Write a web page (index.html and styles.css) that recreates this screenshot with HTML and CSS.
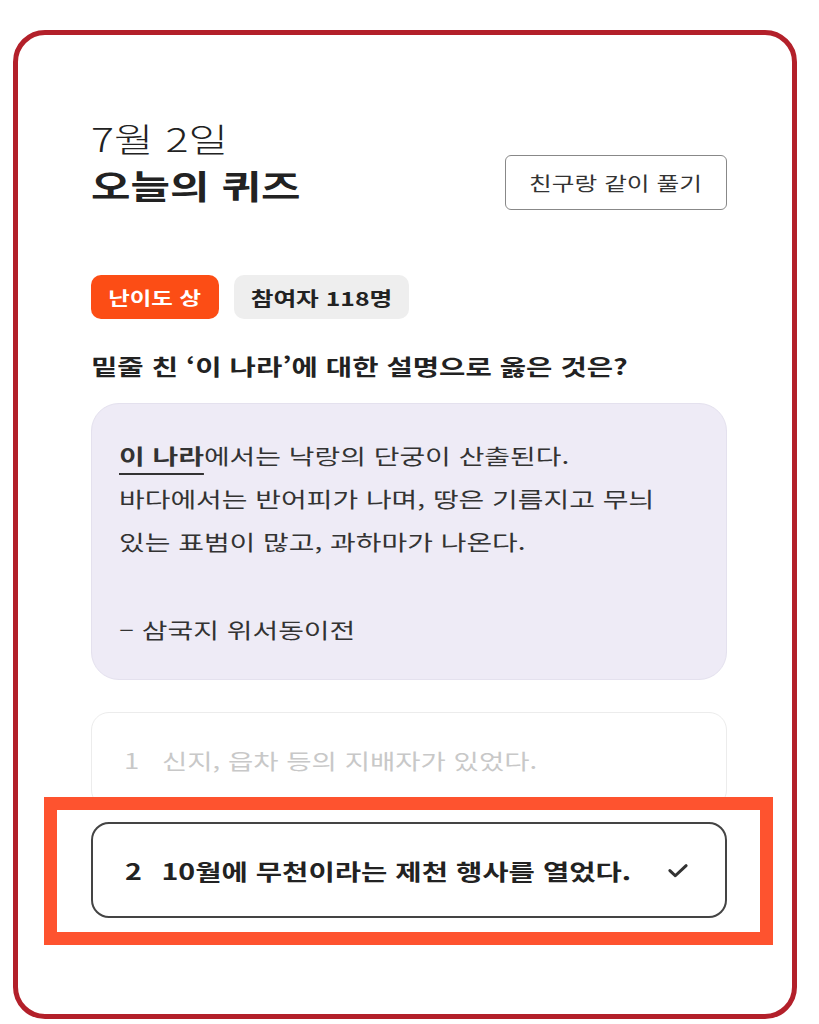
FILE: index.html
```html
<!DOCTYPE html>
<html lang="ko">
<head>
<meta charset="utf-8">
<title>오늘의 퀴즈</title>
<link rel="stylesheet" href="styles.css">
</head>
<body>
<div class="frame">
  <header class="head">
    <div class="titles">
      <div class="date"><span class="wide">7월 2일</span></div>
      <h1 class="title"><span class="wide">오늘의 퀴즈</span></h1>
    </div>
    <button class="share"><span class="wide wide-c">친구랑 같이 풀기</span></button>
  </header>

  <div class="badges">
    <span class="badge badge-level"><span class="wide wide-c">난이도 상</span></span>
    <span class="badge badge-count"><span class="wide wide-c">참여자 118명</span></span>
  </div>

  <p class="question"><span class="wide">밑줄 친 ‘이 나라’에 대한 설명으로 옳은 것은?</span></p>

  <div class="passage">
    <p class="wide"><u class="mark">이 나라</u>에서는 낙랑의 단궁이 산출된다.<br>
    바다에서는 반어피가 나며, 땅은 기름지고 무늬<br>
    있는 표범이 많고, 과하마가 나온다.</p>
    <p class="source"><span class="wide">– 삼국지 위서동이전</span></p>
  </div>

  <ul class="options">
    <li class="option option-dim"><span class="wide"><span class="num">1</span>신지, 읍차 등의 지배자가 있었다.</span></li>
    <li class="option-wrap">
      <div class="option option-picked"><span class="wide"><span class="num">2</span>10월에 무천이라는 제천 행사를 열었다.</span>
        <svg class="check" viewBox="0 0 24 24" width="26" height="26"><path d="M4.5 12.5l5 4.8L19.5 8" fill="none" stroke="#333" stroke-width="2.8" stroke-linecap="round" stroke-linejoin="round"/></svg>
      </div>
      <span class="highlight"></span>
    </li>
  </ul>
</div>
</body>
</html>
```

FILE: styles.css
```css
* { box-sizing: border-box; }

html, body {
  margin: 0;
  background: #ffffff;
}

body {
  font-family: "Noto Sans CJK KR", "Noto Sans", sans-serif;
  color: #222;
  padding: 30px 22px 0 13px;
}

/* the app's type is set wide; stretch text runs sideways */
.wide {
  display: inline-block;
  white-space: nowrap;
  transform: scaleX(1.3);
  transform-origin: 0 50%;
}

.wide-c {
  transform-origin: 50% 50%;
}

.frame {
  border: 5px solid #b3202a;
  border-radius: 32px;
  height: 989px;
  padding: 80px 65px 0 73px;
}

.head {
  display: flex;
  justify-content: space-between;
  align-items: flex-end;
}

.date {
  font-size: 33px;
  font-weight: 300;
  line-height: 46px;
}

.title {
  margin: 0;
  font-size: 33px;
  font-weight: 700;
  line-height: 48px;
}

.share {
  display: flex;
  align-items: center;
  justify-content: center;
  font-family: inherit;
  font-size: 19px;
  color: #333;
  background: #fff;
  border: 1.5px solid #888;
  border-radius: 6px;
  width: 222px;
  height: 55px;
  margin-bottom: -1px;
  padding: 0;
}

.badges {
  display: flex;
  gap: 15px;
  margin-top: 66px;
}

.badge {
  display: inline-flex;
  align-items: center;
  justify-content: center;
  height: 44px;
  border-radius: 10px;
  font-size: 18px;
  font-weight: 700;
}

.badge-level {
  width: 128px;
  background: #fc4d15;
  color: #fff;
}

.badge-count {
  width: 175px;
  background: #eeeeee;
  color: #222;
  font-size: 19px;
}

.question {
  margin: 30px 0 0;
  font-size: 22px;
  font-weight: 700;
  line-height: 32px;
}

.passage {
  margin-top: 22px;
  background: #eeebf6;
  border: 1px solid #e4e1ee;
  border-radius: 28px;
  padding: 30px 27px 30px;
  height: 277px;
  font-size: 21px;
  line-height: 43px;
  color: #333;
}

.passage p { margin: 0; }

.passage .wide {
  transform: scaleX(1.33);
}

.mark {
  font-weight: 700;
  text-decoration-thickness: 2px;
  text-underline-offset: 9px;
}

.passage .source {
  margin-top: 45px;
}

.options {
  list-style: none;
  margin: 32px 0 0;
  padding: 0;
  display: flex;
  flex-direction: column;
  gap: 14px;
}

.option {
  display: flex;
  align-items: center;
  height: 96px;
  padding: 0 32px;
  border-radius: 18px;
  font-size: 21px;
}

.num {
  display: inline-block;
  width: 29px;
}

.option-dim {
  border: 1px solid #ececec;
  color: #c8c8c8;
}

.option-dim .wide {
  transform: scaleX(1.31);
}

.option-wrap {
  position: relative;
}

.option-picked {
  border: 2px solid #444;
  font-size: 22px;
  font-weight: 700;
  color: #222;
}

.option-picked .num {
  width: 28px;
}

.check {
  margin-left: auto;
  margin-right: 2px;
}

/* marker box drawn around the chosen answer */
.highlight {
  position: absolute;
  left: -47px;
  right: -46px;
  top: -25px;
  bottom: -27px;
  border: 13px solid #fe532f;
  pointer-events: none;
}
```
